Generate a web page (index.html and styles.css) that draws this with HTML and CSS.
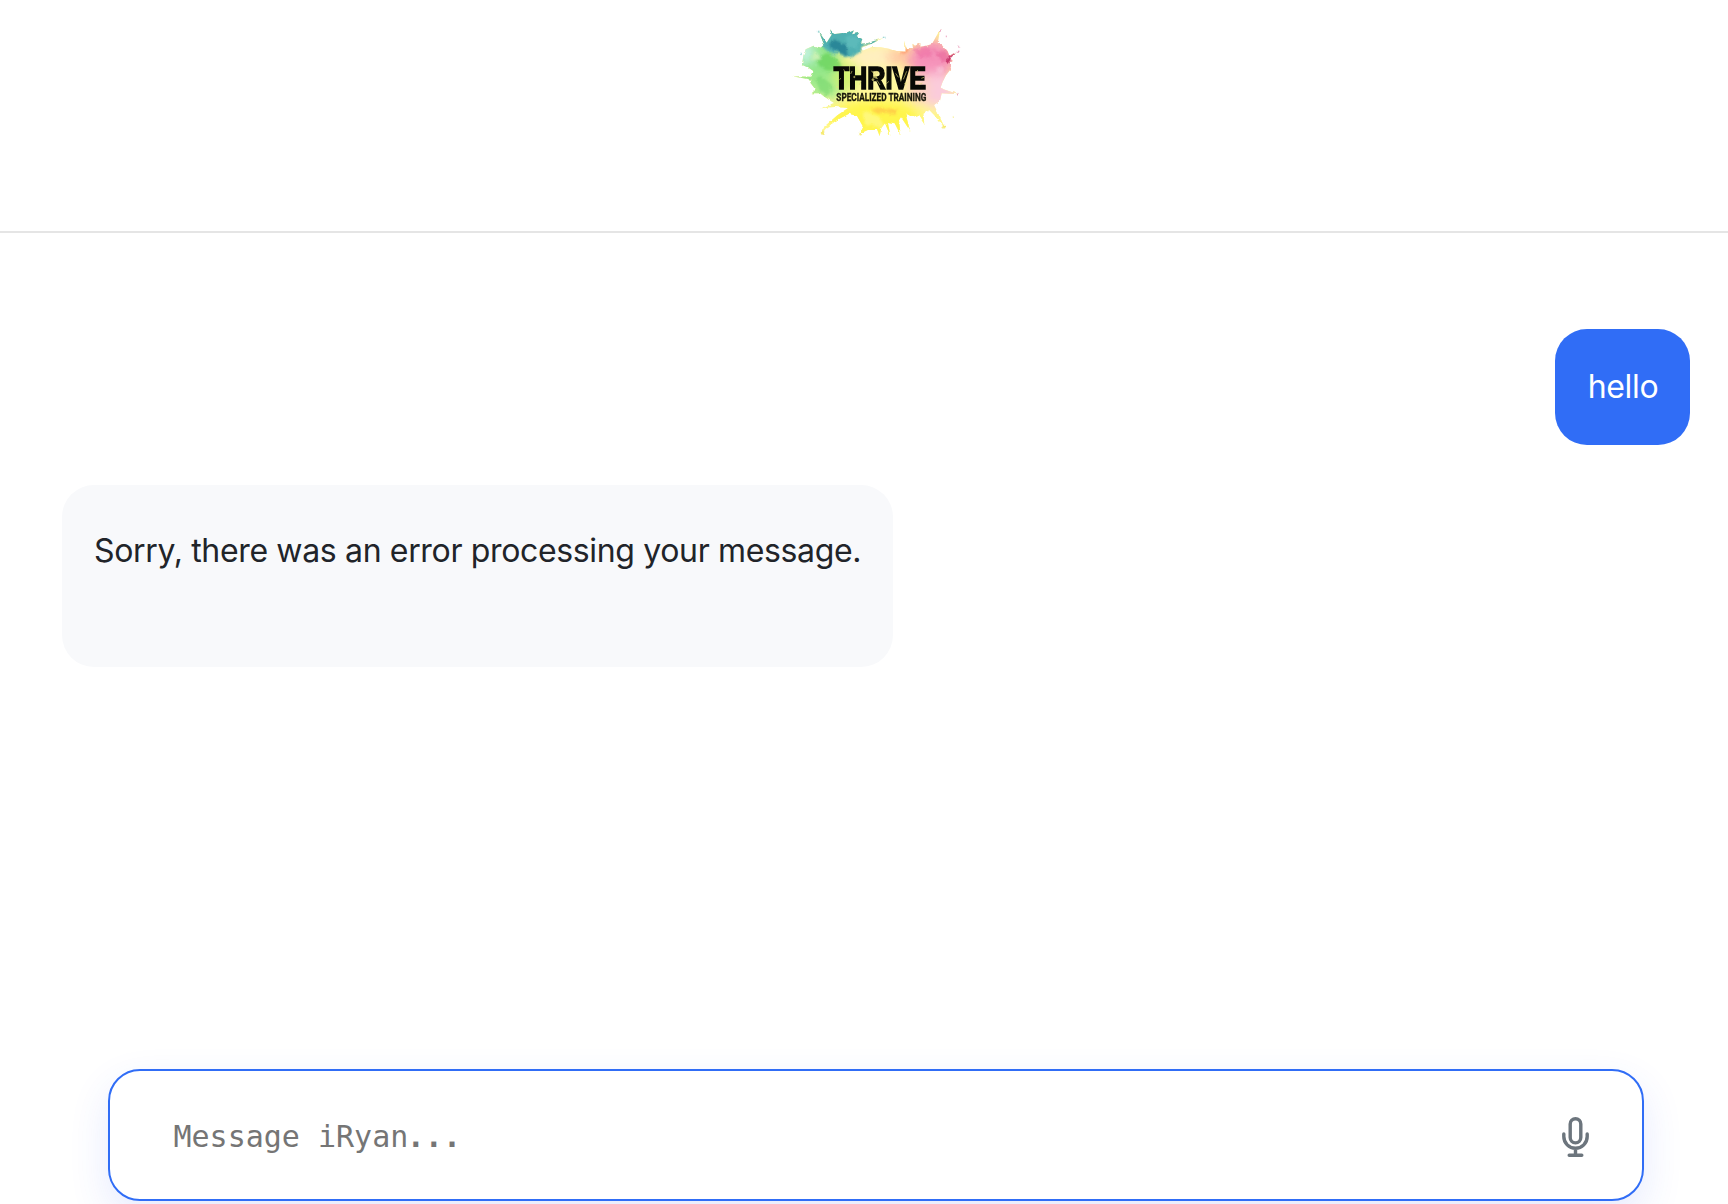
FILE: index.html
```html
<!DOCTYPE html>
<html lang="en">
<head>
<meta charset="utf-8">
<title>iRyan</title>
<link rel="stylesheet" href="styles.css">
</head>
<body>
<div class="app">
  <header class="header">
    <svg class="logo" viewBox="0 0 570 390" role="img" aria-label="Thrive Specialized Training">
      <defs>
        <filter id="wash" x="-30%" y="-30%" width="160%" height="160%"><feGaussianBlur stdDeviation="16"/></filter>
        <filter id="mottle" x="-20%" y="-20%" width="140%" height="140%">
          <feTurbulence type="fractalNoise" baseFrequency="0.045" numOctaves="3" seed="4" result="n"/>
          <feDisplacementMap in="SourceGraphic" in2="n" scale="26"/>
          <feGaussianBlur stdDeviation="3"/>
        </filter>
        <filter id="edge" x="-5%" y="-5%" width="110%" height="110%" color-interpolation-filters="sRGB">
          <feTurbulence type="fractalNoise" baseFrequency="0.06" numOctaves="2" seed="8" result="n"/>
          <feDisplacementMap in="SourceGraphic" in2="n" scale="9" xChannelSelector="R" yChannelSelector="G"/>
          <feGaussianBlur stdDeviation="1.2"/>
        </filter>
        <clipPath id="splash">
          <path d="M133 76 L117 36 L140 68 L155 44 L150 28 L162 42 L184 39 L202 40 L222 31 L216 43 L238 38 L230 49 L247 57 L242 71 L264 69 L316 52 L268 74 L244 83 L248 92 L276 81 L302 82 L330 87 L350 93 L374 95 L372 62 L381 88 L399 84 L397 71 L405 77 L421 69 L421 80 L440 77 L456 72 L481 27 L473 69 L486 76 L503 97 L507 108 L531 95 L510 115 L521 125 L508 126 L513 146 L498 166 L488 185 L481 205 L536 223 L485 220 L480 242 L462 255 L472 276 L496 326 L462 284 L448 270 L430 281 L433 313 L415 285 L397 291 L376 280 L391 334 L363 291 L357 301 L362 346 L344 310 L324 306 L331 348 L315 310 L304 323 L299 349 L291 327 L270 327 L236 343 L248 318 L231 288 L207 281 L166 303 L137 326 L123 345 L128 324 L172 286 L204 264 L164 261 L120 265 L162 249 L133 230 L120 220 L95 220 L107 209 L91 188 L95 179 L36 169 L94 170 L101 154 L88 145 L66 134 L70 107 L77 88 L101 77 L125 83 Z"/>
        </clipPath>
      </defs>
      <g filter="url(#edge)">
        <g clip-path="url(#splash)">
          <rect width="570" height="390" fill="#fff796"/>
          <g filter="url(#wash)">
            <ellipse cx="105" cy="125" rx="78" ry="70" fill="#92e688"/>
            <ellipse cx="130" cy="205" rx="65" ry="34" fill="#a6ec8f"/>
            <ellipse cx="76" cy="100" rx="28" ry="32" fill="#c4f3e2"/>
            <ellipse cx="300" cy="112" rx="90" ry="36" fill="#ffefc0"/>
            <ellipse cx="290" cy="180" rx="80" ry="42" fill="#fff9a0"/>
            <ellipse cx="365" cy="110" rx="45" ry="26" fill="#ffc6a2"/>
            <ellipse cx="455" cy="120" rx="70" ry="62" fill="#f592b9"/>
            <ellipse cx="470" cy="210" rx="54" ry="53" fill="#fbcbdc"/>
            <ellipse cx="415" cy="205" rx="34" ry="45" fill="#fdd3c0"/>
            <ellipse cx="290" cy="295" rx="145" ry="57" fill="#fff54c"/>
            <ellipse cx="455" cy="300" rx="45" ry="35" fill="#fff785"/>
            <ellipse cx="200" cy="170" rx="38" ry="45" fill="#d3f272"/>
          </g>
          <g filter="url(#mottle)">
            <path d="M107 25 L225 25 L325 45 L246 88 L206 112 L165 102 L132 86 Z" fill="#4fb0b1"/>
            <path d="M146 65 L185 64 L203 73 L202 97 L187 106 L168 92 L151 85 Z" fill="#2a8798"/>
            <path d="M195 50 L238 54 L229 83 L204 89 Z" fill="#5bbaba"/>
            <path d="M106 112 Q137 84 164 111 T184 144 Q151 157 121 142 Z" fill="#5fce52" opacity=".6"/>
            <path d="M103 174 Q133 167 153 193 T126 220 Z" fill="#6cd266" opacity=".5"/>
            <path d="M94 104 L113 98 L121 116 L99 125 Z" fill="#c8f0b3"/>
            <path d="M401 88 Q437 69 456 91 T418 115 Z" fill="#ee6a9f" opacity=".5"/>
            <path d="M464 92 Q496 83 510 109 T487 126 Z" fill="#e65a91" opacity=".5"/>
            <path d="M466 142 L490 136 L492 154 L472 160 Z" fill="#f9c3d7" opacity=".7"/>
            <path d="M360 89 L388 85 L387 99 L362 101 Z" fill="#ff8d64" opacity=".7"/>
            <path d="M272 270 L303 260 L321 269 L354 263 L347 284 L310 280 L285 277 Z" fill="#ffc247" opacity=".7"/>
            <path d="M249 285 Q274 266 302 299 T253 313 Z" fill="#fff98e" opacity=".7"/>
          </g>
          <path d="M497 119 L532 91 L522 106 L502 132 Z" fill="#c93a6e"/>
        </g>
        <g fill="#95d4d3"><circle cx="116" cy="35" r="3"/><circle cx="314" cy="53" r="3"/><circle cx="63" cy="102" r="3"/></g>
        <g fill="#e68caf"><circle cx="533" cy="95" r="3"/><circle cx="534" cy="223" r="3"/><circle cx="536" cy="80" r="2"/><circle cx="480" cy="32" r="3"/><circle cx="499" cy="49" r="2"/></g>
        <g fill="#f6ea72"><circle cx="128" cy="338" r="6"/><circle cx="492" cy="320" r="5"/><circle cx="239" cy="342" r="4"/><circle cx="520" cy="291" r="2"/></g>
      </g>
      <text class="logo-name" x="161" y="207" textLength="277" lengthAdjust="spacingAndGlyphs">THRIVE</text>
      <g class="logo-wear">
        <path d="M191 148l4 8M178 179l5-4M216 153l-4 9M243 184l-5 10M274 153l9 6l5 11M285 158l-5 14l13 4M291 181l9 14M319 191l8-7M317 149l-4 6M347 160l8 12M380 154l-10 24M413 150l-3 9M417 194l10-5M432 172l-8 3"/>
        <circle cx="290" cy="158" r="4"/><circle cx="279" cy="179" r="3"/><circle cx="376" cy="191" r="2"/><circle cx="223" cy="171" r="2"/><circle cx="172" cy="201" r="2"/>
      </g>
      <text class="logo-tag" x="169" y="242" textLength="270" lengthAdjust="spacingAndGlyphs">SPECIALIZED TRAINING</text>
    </svg>
  </header>
  <main class="messages">
    <div class="bubble bubble-user">hello</div>
    <div class="bubble bubble-bot">Sorry, there was an error processing your message.</div>
  </main>
  <form class="composer">
    <div class="composer-input" role="textbox" tabindex="0" aria-label="Message">Message iRyan<span class="dots">...</span></div>
    <button class="mic" type="button" aria-label="Record voice">
      <svg viewBox="0 0 27 40" fill="none" stroke="currentColor" stroke-width="3.4" stroke-linecap="round">
        <rect x="8.2" y="1.7" width="10.6" height="24.2" rx="5.3"/>
        <path d="M1.8 17v2.6a11.7 11.7 0 0 0 23.4 0V17M13.5 31.4v7M7.2 38.3h12.6"/>
      </svg>
    </button>
  </form>
</div>
</body>
</html>
```
FILE: styles.css
```css
* {
  box-sizing: border-box;
}

body {
  margin: 0;
  background: #fff;
  font-family: Inter, "Liberation Sans", sans-serif;
}

.app {
  display: flex;
  flex-direction: column;
  height: 1204px;
  overflow: hidden;
}

.header {
  display: flex;
  flex: none;
  justify-content: center;
  height: 233px;
  padding: 20px 0 0 22px;
  border-bottom: 2px solid #e5e5e5;
}

.logo {
  width: 190px;
  height: 130px;
}

.logo-name {
  font: 700 92px "Liberation Sans", sans-serif;
  fill: #080a05;
  stroke: #080a05;
  stroke-width: 5px;
}

.logo-tag {
  font: 700 30px Roboto, sans-serif;
  fill: #18180c;
  stroke: #18180c;
  stroke-width: 1px;
}

.logo-wear {
  fill: #f3e989;
  stroke: #e0da79;
  stroke-width: 2.6px;
  opacity: 0.7;
}

.messages {
  display: flex;
  flex: 1;
  flex-direction: column;
  gap: 40px;
  min-height: 0;
  padding: 96px 38px 0 62px;
}

.bubble {
  padding: 32px;
  border-radius: 32px;
  font-size: 32px;
  line-height: 52px;
  letter-spacing: -0.345px;
  white-space: nowrap;
}

.bubble-user {
  align-self: flex-end;
  width: 135px;
  height: 116px;
  padding-left: 32.7px;
  background: #306df6;
  color: #fff;
}

.bubble-bot {
  align-self: flex-start;
  width: 831px;
  height: 182px;
  padding-top: 40px;
  background: #f8f9fb;
  color: #212429;
}

.composer {
  display: flex;
  flex: none;
  align-items: center;
  height: 132px;
  margin: 0 84px 3px 108px;
  padding: 0 53px 0 62px;
  border: 2px solid #306df6;
  border-radius: 32px;
  background: #fff;
  box-shadow: 0 16px 40px rgba(48, 80, 246, 0.12);
}

.composer-input {
  flex: 1;
  min-width: 0;
  padding: 2px 0 0 1.5px;
  outline: 0;
  color: #757575;
  font: 30px "DejaVu Sans Mono", monospace;
}

.dots {
  margin-left: -1.5px;
  font-weight: 700;
}

.mic {
  display: flex;
  padding: 4px 0 0;
  border: 0;
  background: transparent;
  color: #6c757d;
}

.mic svg {
  width: 27px;
  height: 40px;
  overflow: visible;
}
```
